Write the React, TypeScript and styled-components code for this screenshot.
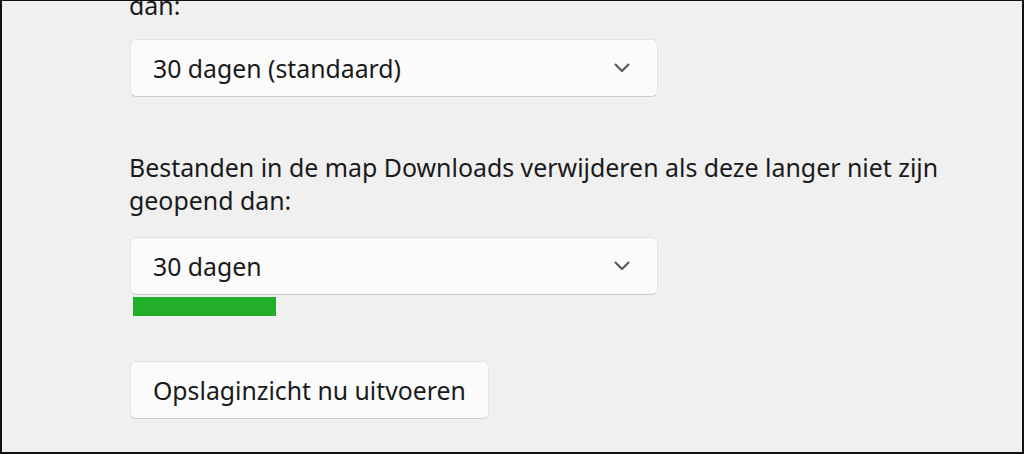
import React from "react";
import styled, { createGlobalStyle } from "styled-components";

const Global = createGlobalStyle`
  html, body { margin: 0; padding: 0; background: #f0f0f0; }
  * { box-sizing: border-box; }
`;

const Frame = styled.div`
  width: 1024px;
  height: 454px;
  overflow: hidden;
  background: #f0f0f0;
  border-style: solid;
  border-color: #111;
  border-width: 1px 2px 2px 2px;
  font-family: "Noto Sans", "Open Sans", sans-serif;
  color: #1a1a1a;
`;

const Content = styled.div`
  display: flex;
  flex-direction: column;
  align-items: flex-start;
  padding-left: 127px;
  margin-top: -12px;
`;

const Label = styled.div<{ $top?: number }>`
  font-size: 24.9px;
  line-height: 33px;
  max-width: 840px;
  margin-top: ${(p) => p.$top ?? 0}px;
`;

const Dropdown = styled.div<{ $top?: number }>`
  width: 528px;
  height: 58px;
  margin-top: ${(p) => p.$top ?? 0}px;
  margin-left: 1px;
  display: flex;
  align-items: center;
  justify-content: space-between;
  padding: 0 27px 0 22px;
  background: #fbfbfb;
  border: 1px solid #e3e3e3;
  border-bottom-color: #cdcdcd;
  border-radius: 6px;
  font-size: 24.8px;
`;

const Bar = styled.div<{ $width: number }>`
  width: ${(p) => p.$width}px;
  height: 19px;
  margin: 2px 0 0 4px;
  background: #22ae29;
`;

const Button = styled.div<{ $top?: number }>`
  height: 58px;
  margin-top: ${(p) => p.$top ?? 0}px;
  margin-left: 1px;
  display: flex;
  align-items: center;
  padding: 0 22px;
  background: #fbfbfb;
  border: 1px solid #e3e3e3;
  border-bottom-color: #cdcdcd;
  border-radius: 6px;
  font-size: 24.8px;
`;

const Chevron = () => (
  <svg width="16" height="10" viewBox="0 0 16 10">
    <path d="M1.5 1.5 L8 8 L14.5 1.5" fill="none" stroke="#555" strokeWidth="2" strokeLinecap="round" strokeLinejoin="round" />
  </svg>
);

export default function App() {
  return (
    <>
      <Global />
      <Frame>
        <Content>
          <Label>dan:</Label>
          <Dropdown $top={17}>
            <span>30 dagen (standaard)</span>
            <Chevron />
          </Dropdown>
          <Label $top={54}>
            Bestanden in de map Downloads verwijderen als deze langer niet zijn geopend dan:
          </Label>
          <Dropdown $top={20}>
            <span>30 dagen</span>
            <Chevron />
          </Dropdown>
          <Bar $width={143} />
          <Button $top={45}>Opslaginzicht nu uitvoeren</Button>
        </Content>
      </Frame>
    </>
  );
}
